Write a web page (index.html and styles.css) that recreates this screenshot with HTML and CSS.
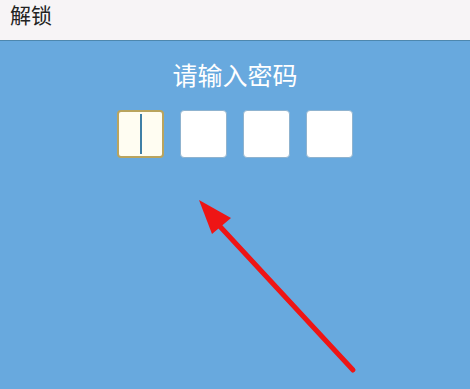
FILE: index.html
```html
<!DOCTYPE html>
<html lang="zh-CN">
<head>
  <meta charset="UTF-8">
  <title>解锁</title>
  <link rel="stylesheet" href="styles.css">
</head>
<body>

  <div class="bar">解锁</div>

  <div class="main">
    <div class="prompt">请输入密码</div>
    <div class="pins">
      <div class="pin focus"><span class="caret"></span></div>
      <div class="pin"></div>
      <div class="pin"></div>
      <div class="pin"></div>
    </div>

    <svg class="arrow" width="470" height="348" viewBox="0 41 470 348">
      <line x1="353" y1="370" x2="214" y2="220" stroke="#ee1515" stroke-width="5" stroke-linecap="round"/>
      <polygon points="199,200 231,218 212,234" fill="#ee1515"/>
    </svg>
  </div>

</body>
</html>
```

FILE: styles.css
```css
body {
  margin: 0;
  font-family: "Noto Sans CJK SC", "Noto Sans", sans-serif;
  background: #68a9de;
  overflow: hidden;
}
.bar {
  height: 40px;
  background: #f7f4f6;
  border-bottom: 1px solid #4d87ae;
  padding-left: 10px;
  font-size: 21px;
  line-height: 28px;
  color: #222;
}
.main {
  position: relative;
  height: 348px;
  display: flex;
  flex-direction: column;
  align-items: center;
}
.prompt {
  margin-top: 16px;
  font-size: 25px;
  line-height: 34px;
  color: #fff;
}
.pins {
  display: flex;
  gap: 16px;
  margin-top: 19px;
}
.pin {
  width: 47px;
  height: 48px;
  background: #fff;
  border: 1px solid #8fb3cf;
  border-radius: 4px;
  box-sizing: border-box;
  display: flex;
  align-items: center;
  justify-content: center;
}
.pin.focus {
  background: #fffdf2;
  border: 2px solid #b9a45e;
}
.caret {
  width: 2px;
  height: 40px;
  background: #3f7fa6;
}
.arrow {
  position: absolute;
  left: 0;
  top: 0;
}
```
